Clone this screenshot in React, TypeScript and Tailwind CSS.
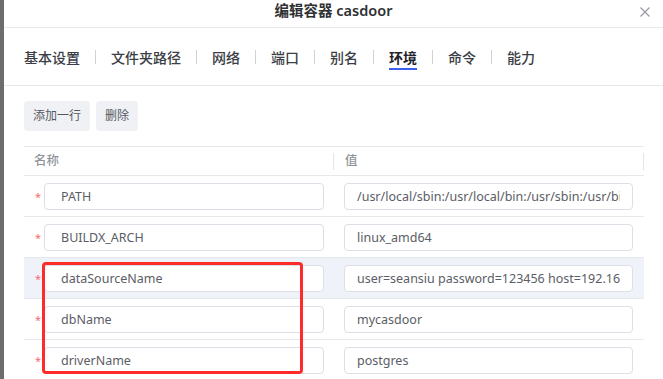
import React from "react";

const tabs = ["基本设置", "文件夹路径", "网络", "端口", "别名", "环境", "命令", "能力"];

const rows = [
  { name: "PATH", value: "/usr/local/sbin:/usr/local/bin:/usr/sbin:/usr/bin:/sbin:/bin" },
  { name: "BUILDX_ARCH", value: "linux_amd64" },
  { name: "dataSourceName", value: "user=seansiu password=123456 host=192.168.1.10 port=5432", hover: true },
  { name: "dbName", value: "mycasdoor" },
  { name: "driverName", value: "postgres" },
];

const font = { fontFamily: '"Noto Sans", "Noto Sans CJK SC", sans-serif' };

export default function App() {
  return (
    <div className="flex w-[663px] h-[379px] overflow-hidden bg-white" style={font}>
      {/* dimmed page behind the dialog */}
      <div className="w-[4px] shrink-0 bg-[#6d6d6d]" />

      <div className="flex-1 flex flex-col bg-white min-w-0">
        {/* header */}
        <div className="relative h-[28px] shrink-0 flex justify-center border-b border-[#e6e8ee]">
          <span className="text-[14.5px] leading-[20px] font-semibold text-[#303133]">编辑容器 casdoor</span>
          <svg
            className="absolute right-[13px] top-[7px]"
            width="10"
            height="10"
            viewBox="0 0 10 10"
            fill="none"
            stroke="#9a9ca3"
            strokeWidth="1.3"
          >
            <path d="M0.5 0.5 L9.5 9.5 M9.5 0.5 L0.5 9.5" />
          </svg>
        </div>

        {/* tabs */}
        <div className="h-[58px] shrink-0 flex items-center pl-[20px] border-b border-[#e6e8ee]">
          {tabs.map((t, i) => (
            <div key={t} className="flex items-center">
              {i > 0 && <div className="w-px h-[14px] bg-[#cfd2d9] mx-[15px]" />}
              <div className="relative">
                <span
                  className={
                    "text-[14px] leading-[20px] " +
                    (t === "环境" ? "font-semibold text-[#1f2329]" : "font-medium text-[#3a3d44]")
                  }
                >
                  {t}
                </span>
                {t === "环境" && (
                  <div className="absolute left-0 right-0 top-[23px] h-[2px] bg-[#3d5ff0]" />
                )}
              </div>
            </div>
          ))}
        </div>

        {/* content */}
        <div className="relative px-[20px] pt-[15px]">
          <div className="flex gap-[6px]">
            <button className="h-[30px] px-[9px] rounded-[4px] bg-[#f0f1f5] text-[12px] text-[#555860]">
              添加一行
            </button>
            <button className="h-[30px] px-[9px] rounded-[4px] bg-[#f0f1f5] text-[12px] text-[#555860]">
              删除
            </button>
          </div>

          <div className="mt-[15px] w-[620px] border-t border-[#e6e8ee]">
            <div className="flex h-[29px] items-center border-b border-[#e6e8ee]">
              <div className="w-[309px] flex items-center pl-[10px] text-[12.5px] font-medium text-[#909399]">
                名称
              </div>
              <div className="w-px h-[17px] bg-[#e3e5ea]" />
              <div className="flex-1 pl-[11px] text-[12.5px] font-medium text-[#909399]">值</div>
              <div className="w-px h-[17px] bg-[#e3e5ea]" />
            </div>

            {rows.map((r) => (
              <div
                key={r.name}
                className={
                  "flex h-[41px] items-center border-b border-[#e6e8ee] " + (r.hover ? "bg-[#f0f2fa]" : "")
                }
              >
                <div className="w-[310px] flex items-center pl-[11px]">
                  <span className="w-[9px] text-[11px] leading-none text-[#f56c6c]">*</span>
                  <input
                    readOnly
                    value={r.name}
                    className="w-[280px] h-[27px] rounded-[4px] border border-[#dcdfe6] bg-white pl-[16px] pr-[10px] text-[12.5px] text-[#5a5d66] outline-none"
                    style={font}
                  />
                </div>
                <div className="flex-1 pl-[10px]">
                  <input
                    readOnly
                    value={r.value}
                    className="w-[289px] h-[27px] rounded-[4px] border border-[#dcdfe6] bg-white px-[12px] text-[12.5px] text-[#5a5d66] outline-none"
                    style={font}
                  />
                </div>
              </div>
            ))}
          </div>

          {/* red annotation box */}
          <div className="absolute left-[38px] top-[176px] w-[261px] h-[112px] border-[3px] border-[#ff2b2b] rounded-[4px] pointer-events-none" />
        </div>
      </div>
    </div>
  );
}
